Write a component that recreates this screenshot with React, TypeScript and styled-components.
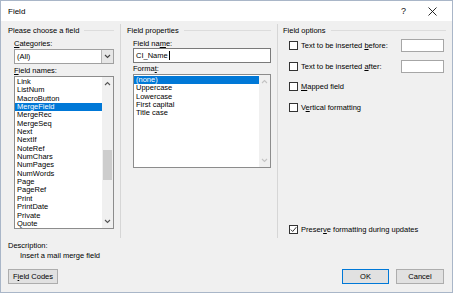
import React from 'react';
import styled, { createGlobalStyle } from 'styled-components';

const GlobalStyle = createGlobalStyle`
    html, body {
        margin: 0;
        padding: 0;
        background: #f0f0f0;
    }
    body {
        font-family: 'Liberation Sans', Arial, sans-serif;
        font-size: 7.5px;
        color: #000;
    }
`;

const fieldNames = [
    'Link', 'ListNum', 'MacroButton', 'MergeField', 'MergeRec', 'MergeSeq', 'Next', 'NextIf',
    'NoteRef', 'NumChars', 'NumPages', 'NumWords', 'Page', 'PageRef', 'Print', 'PrintDate',
    'Private', 'Quote',
];

const formats = ['(none)', 'Uppercase', 'Lowercase', 'First capital', 'Title case'];

const Chevron = ({ up, color }: { up?: boolean; color: string }) => (
    <svg width="7" height="5" viewBox="0 0 7 5">
        <path d={up ? 'M1 4 L3.5 1.5 L6 4' : 'M1 1 L3.5 3.5 L6 1'} fill="none" stroke={color} strokeWidth="1.1" />
    </svg>
);

const App = () => {
    return (
        <>
            <GlobalStyle />
            <Dialog>
                <TitleBar>
                    <Title>Field</Title>
                    <TitleButton>?</TitleButton>
                    <TitleButton>
                        <svg width="9" height="9" viewBox="0 0 9 9">
                            <path d="M0.5 0.5 L8.5 8.5 M8.5 0.5 L0.5 8.5" stroke="#111" strokeWidth="0.9" />
                        </svg>
                    </TitleButton>
                </TitleBar>
                <Columns>
                    <Column $sep $padLeft={7}>
                        <GroupTitle>Please choose a field</GroupTitle>
                        <Inner>
                            <Label $mt={4}><u>C</u>ategories:</Label>
                            <Combo>
                                <ComboText>(All)</ComboText>
                                <ComboButton><Chevron color="#444" /></ComboButton>
                            </Combo>
                            <Label $mt={2}><u>F</u>ield names:</Label>
                            <ListBox $h={153} $mt={1}>
                                <ListItems>
                                    {fieldNames.map(n => (
                                        <ListItem key={n} $selected={n === 'MergeField'}>{n}</ListItem>
                                    ))}
                                </ListItems>
                                <ScrollBar>
                                    <Chevron up color="#555" />
                                    <ScrollTrack>
                                        <Thumb style={{ marginTop: 64, height: 30 }} />
                                    </ScrollTrack>
                                    <Chevron color="#555" />
                                </ScrollBar>
                            </ListBox>
                        </Inner>
                    </Column>
                    <Column $sep $padLeft={6}>
                        <GroupTitle>Field properties</GroupTitle>
                        <Inner>
                            <Label $mt={4}>Field na<u>m</u>e:</Label>
                            <TextInput>CI_Name<Caret /></TextInput>
                            <Label $mt={1}>Forma<u>t</u>:</Label>
                            <ListBox $h={94} $mt={1}>
                                <ListItems $pt={1}>
                                    {formats.map(f => (
                                        <ListItem key={f} $selected={f === '(none)'}>{f}</ListItem>
                                    ))}
                                </ListItems>
                                <ScrollBar>
                                    <Chevron up color="#c4c4c4" />
                                    <ScrollTrack />
                                    <Chevron color="#c4c4c4" />
                                </ScrollBar>
                            </ListBox>
                        </Inner>
                    </Column>
                    <Column $padLeft={5}>
                        <GroupTitle>Field options</GroupTitle>
                        <OptionRow $mt={4} $h={13}>
                            <CheckBox />
                            <span>Text to be inserted <u>b</u>efore:</span>
                            <SmallInput />
                        </OptionRow>
                        <OptionRow $mt={8} $h={13}>
                            <CheckBox />
                            <span>Text to be inserted <u>a</u>fter:</span>
                            <SmallInput />
                        </OptionRow>
                        <OptionRow $mt={9} $h={9}>
                            <CheckBox />
                            <span><u>M</u>apped field</span>
                        </OptionRow>
                        <OptionRow $mt={12} $h={9}>
                            <CheckBox />
                            <span>V<u>e</u>rtical formatting</span>
                        </OptionRow>
                        <OptionRow $mt="auto" $h={9}>
                            <CheckBox>
                                <svg width="7" height="7" viewBox="0 0 7 7">
                                    <path d="M0.8 3.6 L2.7 5.5 L6.3 1.2" fill="none" stroke="#222" strokeWidth="0.9" />
                                </svg>
                            </CheckBox>
                            <span>Preser<u>v</u>e formatting during updates</span>
                        </OptionRow>
                    </Column>
                </Columns>
                <Description>
                    <div>Description:</div>
                    <DescriptionText>Insert a mail merge field</DescriptionText>
                </Description>
                <Footer>
                    <Button $w={50}>F<u>i</u>eld Codes</Button>
                    <Spacer />
                    <Button $w={47} $default>OK</Button>
                    <Button $w={48}>Cancel</Button>
                </Footer>
            </Dialog>
        </>
    );
};

export default App;

const Dialog = styled.div`
    width: 453px;
    height: 293px;
    box-sizing: border-box;
    border: 1px solid #a9b6c8;
    background: #f0f0f0;
    display: flex;
    flex-direction: column;
    overflow: hidden;
`;

const TitleBar = styled.div`
    height: 20px;
    background: #fff;
    display: flex;
    align-items: center;
    padding: 0 5px 0 7px;
    font-size: 8px;
`;

const Title = styled.div`
    flex: 1;
`;

const TitleButton = styled.div`
    width: 29px;
    display: flex;
    justify-content: center;
    align-items: center;
    font-size: 9px;
    color: #111;
`;

const Columns = styled.div`
    display: grid;
    grid-template-columns: 120px 157px 1fr;
    height: 217px;
`;

const Column = styled.div<{ $sep?: boolean; $padLeft: number }>`
    display: flex;
    flex-direction: column;
    padding: 2px 0 4px ${p => p.$padLeft}px;
    margin-top: 3px;
    border-right: ${p => (p.$sep ? '1px solid #d6d6d6' : 'none')};
`;

const GroupTitle = styled.div`
    display: flex;
    align-items: center;
    gap: 5px;
    height: 9px;
    line-height: 9px;
    padding-right: 6px;

    &::after {
        content: '';
        flex: 1;
        border-top: 1px solid #dcdcdc;
    }
`;

const Inner = styled.div`
    display: flex;
    flex-direction: column;
    padding: 0 6px 0 6px;
`;

const Label = styled.div<{ $mt: number }>`
    height: 9px;
    line-height: 9px;
    margin-top: ${p => p.$mt}px;
`;

const Combo = styled.div`
    height: 15px;
    box-sizing: border-box;
    border: 1px solid #a0a0a0;
    background: #fff;
    display: flex;
    align-items: stretch;
    margin-top: 1px;
`;

const ComboText = styled.div`
    flex: 1;
    display: flex;
    align-items: center;
    padding-left: 2px;
`;

const ComboButton = styled.div`
    width: 11px;
    background: #e6e6e6;
    border-left: 1px solid #b4b4b4;
    display: flex;
    align-items: center;
    justify-content: center;
`;

const ListBox = styled.div<{ $h: number; $mt: number }>`
    height: ${p => p.$h}px;
    margin-top: ${p => p.$mt}px;
    box-sizing: border-box;
    border: 1px solid #8c8c8c;
    background: #fff;
    display: flex;
`;

const ListItems = styled.div<{ $pt?: number }>`
    flex: 1;
    padding-top: ${p => p.$pt ?? 1}px;
`;

const ListItem = styled.div<{ $selected?: boolean }>`
    height: 8.35px;
    line-height: 8.35px;
    padding-left: 2px;
    background: ${p => (p.$selected ? '#0078d7' : 'transparent')};
    color: ${p => (p.$selected ? '#fff' : '#000')};
    white-space: nowrap;
`;

const ScrollBar = styled.div`
    width: 11px;
    background: #f0f0f0;
    display: flex;
    flex-direction: column;
    align-items: center;
    padding: 4px 0;
    box-sizing: border-box;
`;

const ScrollTrack = styled.div`
    flex: 1;
    width: 100%;
    padding: 0 1px;
    box-sizing: border-box;
`;

const Thumb = styled.div`
    background: #cdcdcd;
    width: 100%;
`;

const TextInput = styled.div`
    height: 15px;
    box-sizing: border-box;
    border: 1px solid #7a7a7a;
    background: #fff;
    display: flex;
    align-items: center;
    padding-left: 2px;
`;

const Caret = styled.span`
    display: inline-block;
    width: 1px;
    height: 9px;
    background: #000;
    margin-left: 1px;
`;

const OptionRow = styled.div<{ $mt: number | 'auto'; $h: number }>`
    display: flex;
    align-items: center;
    gap: 3px;
    height: ${p => p.$h}px;
    margin-top: ${p => (p.$mt === 'auto' ? 'auto' : `${p.$mt}px`)};
    padding: 0 8px 0 6px;
    white-space: nowrap;
`;

const CheckBox = styled.div`
    width: 9px;
    height: 9px;
    box-sizing: border-box;
    border: 1px solid #333;
    background: #fff;
    display: flex;
    align-items: center;
    justify-content: center;
    flex-shrink: 0;
`;

const SmallInput = styled.div`
    margin-left: auto;
    width: 43px;
    height: 13px;
    box-sizing: border-box;
    border: 1px solid #a6a6a6;
    background: #fff;
`;

const Description = styled.div`
    padding: 3px 0 0 7px;
    line-height: 10px;
`;

const DescriptionText = styled.div`
    padding-left: 12px;
`;

const Footer = styled.div`
    display: flex;
    gap: 7px;
    padding: 8px 8px 0 7px;
`;

const Spacer = styled.div`
    flex: 1;
`;

const Button = styled.div<{ $w: number; $default?: boolean }>`
    width: ${p => p.$w}px;
    height: 15px;
    box-sizing: border-box;
    background: #e1e1e1;
    border: 1px solid ${p => (p.$default ? '#0078d7' : '#adadad')};
    display: flex;
    align-items: center;
    justify-content: center;
`;
